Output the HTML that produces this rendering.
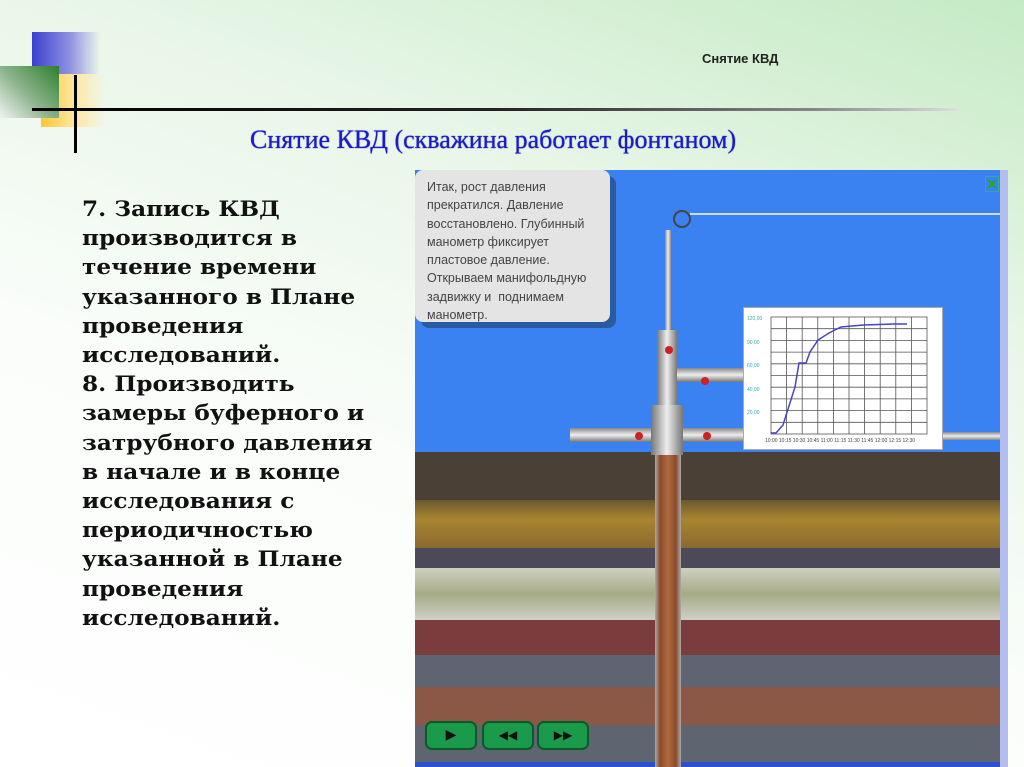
<!DOCTYPE html>
<html><head><meta charset="utf-8"><style>
body{margin:0;width:1024px;height:767px;overflow:hidden;position:relative;font-family:"Liberation Serif",serif;
background:linear-gradient(200deg,#c4eac4 0%,#e8f6e8 30%,#fafdfa 60%,#ffffff 100%);}
.a{position:absolute}
</style></head><body>
<div class="a" style="left:32px;top:32px;width:68px;height:42px;background:linear-gradient(90deg,#3b3fd0,#8e90e0 55%,rgba(255,255,255,0))"></div>
<div class="a" style="left:41px;top:74px;width:65px;height:53px;background:linear-gradient(90deg,#ffc830,#ffe6a0 50%,rgba(255,255,255,0))"></div>
<div class="a" style="left:0;top:66px;width:59px;height:52px;background:linear-gradient(225deg,#2e7f2e,#8fb58f 55%,#f0f4f0)"></div>
<div class="a" style="left:32px;top:108px;width:925px;height:3px;background:linear-gradient(90deg,#000 0%,#222 50%,#888 85%,#ddd 100%)"></div>
<div class="a" style="left:74px;top:75px;width:3px;height:78px;background:#000"></div>
<div class="a" style="left:702px;top:51px;font:bold 13px 'Liberation Sans',sans-serif;color:#222">Снятие КВД</div>
<div class="a" style="left:250px;top:125px;font-size:26px;color:#1a1ac8;text-shadow:0 0 1px #1a1ac8">Снятие КВД (скважина работает фонтаном)</div>
<div class="a" style="left:82px;top:195px;font-family:'DejaVu Serif',serif;font-weight:bold;font-size:21.5px;line-height:29.2px;color:#111;white-space:nowrap;transform:scaleX(1.08);transform-origin:left">7. Запись КВД<br>производится в<br>течение времени<br>указанного в Плане<br>проведения<br>исследований.<br>8. Производить<br>замеры буферного и<br>затрубного давления<br>в начале и в конце<br>исследования с<br>периодичностью<br>указанной в Плане<br>проведения<br>исследований.</div>
<div class="a" style="left:1000px;top:170px;width:8px;height:597px;background:#b4bdf0"></div>
<div class="a" style="left:415px;top:170px;width:585px;height:597px;overflow:hidden;background:#3a82f2">
 <div class="a" style="left:0;top:282px;width:585px;height:48px;background:#4a4035"></div>
 <div class="a" style="left:0;top:330px;width:585px;height:48px;background:linear-gradient(180deg,#6a5830,#a8852f 40%,#8a6a30)"></div>
 <div class="a" style="left:0;top:378px;width:585px;height:20px;background:#4c4a58"></div>
 <div class="a" style="left:0;top:398px;width:585px;height:52px;background:linear-gradient(180deg,#cfd0c0,#a6ab85 50%,#cfd0c8)"></div>
 <div class="a" style="left:0;top:450px;width:585px;height:35px;background:#7a3c3c"></div>
 <div class="a" style="left:0;top:485px;width:585px;height:32px;background:#5e6472"></div>
 <div class="a" style="left:0;top:517px;width:585px;height:38px;background:#8c5846"></div>
 <div class="a" style="left:0;top:555px;width:585px;height:37px;background:#5e6470"></div>
 <div class="a" style="left:0;top:592px;width:585px;height:5px;background:#2a50d0"></div>
 <div class="a" style="left:0;top:0;width:195px;height:152px;background:#e4e4e4;border-radius:8px;box-shadow:6px 6px 0 #2b5aa0"></div>
 <div class="a" style="left:12px;top:8px;font:12.5px/18.3px 'Liberation Sans',sans-serif;color:#444;white-space:nowrap">Итак, рост давления<br>прекратился. Давление<br>восстановлено. Глубинный<br>манометр фиксирует<br>пластовое давление.<br>Открываем манифольдную<br>задвижку и &nbsp;поднимаем<br>манометр.</div>
 <div class="a" style="left:570px;top:6px;width:12px;height:14px;border:1px solid #3a9;color:#2a2;font:bold 14px sans-serif;line-height:14px">✕</div>
 <div class="a" style="left:275px;top:43px;width:310px;height:2px;background:#cde"></div>
 <div class="a" style="left:258px;top:40px;width:14px;height:14px;border:2px solid #444;border-radius:50%"></div>
 <div class="a" style="left:250px;top:60px;width:6px;height:260px;background:linear-gradient(90deg,#888,#eee,#888)"></div>
 <div class="a" style="left:242px;top:160px;width:20px;height:110px;background:linear-gradient(90deg,#777,#eee,#777)"></div>
 <div class="a" style="left:262px;top:198px;width:70px;height:14px;background:linear-gradient(#888,#eee,#777)"></div>
 <div class="a" style="left:155px;top:258px;width:175px;height:14px;background:linear-gradient(#888,#eee,#777)"></div>
 <div class="a" style="left:236px;top:235px;width:32px;height:50px;background:linear-gradient(90deg,#777,#eee,#777)"></div>
 <div class="a" style="left:240px;top:285px;width:26px;height:312px;background:linear-gradient(90deg,#aaa,#8a4a2a 20%,#b06a40 50%,#8a4a2a 80%,#aaa)"></div>
 <div class="a" style="left:250px;top:176px;width:8px;height:8px;border-radius:50%;background:#c22"></div>
 <div class="a" style="left:286px;top:207px;width:8px;height:8px;border-radius:50%;background:#c22"></div>
 <div class="a" style="left:220px;top:262px;width:8px;height:8px;border-radius:50%;background:#c22"></div>
 <div class="a" style="left:288px;top:262px;width:8px;height:8px;border-radius:50%;background:#c22"></div>
 <div class="a" style="left:520px;top:262px;width:65px;height:8px;background:linear-gradient(#888,#eee,#888)"></div>
 <div class="a" style="left:328px;top:137px;width:198px;height:141px;background:#fff;border:1px solid #aaa"></div>
 <svg class="a" style="left:328px;top:137px" width="200" height="143">
  <g stroke="#555" stroke-width="0.8">
   <rect x="28" y="10" width="156" height="117" fill="none"/>
   <path d="M43.6 10V127M59.2 10V127M74.8 10V127M90.4 10V127M106 10V127M121.6 10V127M137.2 10V127M152.8 10V127M168.4 10V127M28 21.7H184M28 33.4H184M28 45.1H184M28 56.8H184M28 68.5H184M28 80.2H184M28 91.9H184M28 103.6H184M28 115.3H184"/>
  </g>
  <path d="M28 126H33L40 118L52 80L56 56H63L67 45L75 33L86 26L98 20L120 18L150 17L164 17" fill="none" stroke="#4444cc" stroke-width="1.5"/>
  <g font-family="Liberation Sans" font-size="5" fill="#3aa">
   <text x="4" y="13">120,00</text><text x="4" y="37">90,00</text><text x="4" y="60">60,00</text><text x="4" y="84">40,00</text><text x="4" y="107">20,00</text>
   <text x="22" y="135" fill="#444">10:00 10:15 10:30 10:45 11:00 11:15 11:30 11:45 12:00 12:15 12:30</text>
  </g>
 </svg>
 <div class="a" style="left:10px;top:551px;width:48px;height:25px;background:#1a9a4a;border:2px solid #0a5a2a;border-radius:7px;color:#111;font-size:14px;text-align:center;line-height:25px">▶</div>
 <div class="a" style="left:67px;top:551px;width:48px;height:25px;background:#1a9a4a;border:2px solid #0a5a2a;border-radius:7px;color:#111;font-size:12px;text-align:center;line-height:25px">◀◀</div>
 <div class="a" style="left:122px;top:551px;width:48px;height:25px;background:#1a9a4a;border:2px solid #0a5a2a;border-radius:7px;color:#111;font-size:12px;text-align:center;line-height:25px">▶▶</div>
</div>
</body></html>
